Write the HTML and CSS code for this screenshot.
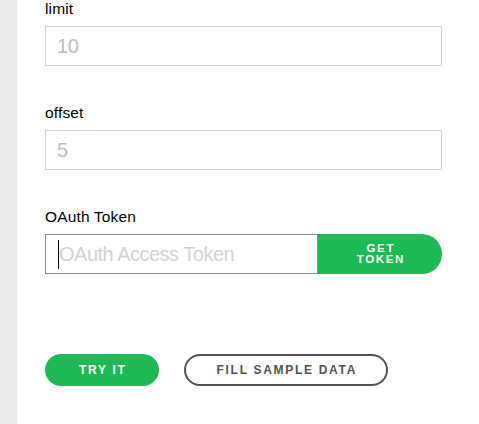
FILE: index.html
```html
<!DOCTYPE html>
<html>
<head>
<meta charset="utf-8">
<link rel="stylesheet" href="styles.css">
</head>
<body>
<div class="page">
  <aside class="rail"></aside>
  <main class="main">
    <div class="field">
      <label class="label">limit</label>
      <input class="input" type="text" placeholder="10">
    </div>
    <div class="field">
      <label class="label">offset</label>
      <input class="input" type="text" placeholder="5">
    </div>
    <div class="field">
      <label class="label">OAuth Token</label>
      <div class="token-row">
        <div class="token-wrap">
          <input class="input token-input" type="text" placeholder="OAuth Access Token">
          <span class="caret"></span>
        </div>
        <button class="get-token">GET<br>TOKEN</button>
      </div>
    </div>
    <div class="actions">
      <button class="btn btn-primary">TRY IT</button>
      <button class="btn btn-outline">FILL SAMPLE DATA</button>
    </div>
  </main>
</div>
</body>
</html>
```

FILE: styles.css
```css
* { box-sizing: border-box; }
html, body { margin: 0; padding: 0; background: #fff; }
body { font-family: "Liberation Sans", Arial, sans-serif; }

.page {
  display: flex;
  min-height: 424px;
}
.rail {
  width: 17px;
  flex: 0 0 17px;
  background: #ebebeb;
}
.main {
  flex: 1;
  padding: 0 37px 0 28px;
  display: flex;
  flex-direction: column;
}
.field {
  display: flex;
  flex-direction: column;
  margin-bottom: 38px;
}
.label {
  font-size: 15.5px;
  line-height: 18px;
  letter-spacing: 0.15px;
  color: #000;
  margin-bottom: 8px;
}
.input {
  width: 100%;
  height: 40px;
  border: 1px solid #d2d2d2;
  border-radius: 0;
  padding: 0 11px;
  font-family: "Liberation Sans", Arial, sans-serif;
  font-size: 20px;
  letter-spacing: -0.4px;
  color: #222;
  outline: none;
  background: #fff;
}
.input::placeholder { color: #bdbdbd; }

.token-row {
  display: flex;
  height: 40px;
}
.token-wrap {
  position: relative;
  width: 273px;
  flex: 0 0 273px;
}
.token-input {
  border-color: #8a8a8a;
  padding-left: 13px;
  letter-spacing: -0.5px;
}
.token-input::placeholder { color: #d2d2d2; }
.caret {
  position: absolute;
  left: 13px;
  top: 6px;
  width: 1px;
  height: 29px;
  background: #000;
}
.get-token {
  flex: 1;
  height: 40px;
  border: none;
  border-radius: 0 20px 20px 0;
  background: #1db954;
  color: #fff;
  font-family: "Liberation Sans", Arial, sans-serif;
  font-weight: bold;
  font-size: 11.5px;
  line-height: 11px;
  letter-spacing: 1.6px;
  padding: 0 0 0 1.6px;
  text-align: center;
}

.actions {
  display: flex;
  gap: 25px;
  margin-top: 42px;
}
.btn {
  height: 32px;
  border-radius: 16px;
  font-family: "Liberation Sans", Arial, sans-serif;
  font-weight: bold;
  font-size: 12px;
  letter-spacing: 1.7px;
  line-height: 1;
  cursor: pointer;
}
.btn-primary {
  background: #1db954;
  color: #fff;
  border: none;
  padding: 0 32px 0 34px;
}
.btn-outline {
  background: #fff;
  color: #535353;
  border: 2px solid #535353;
  padding: 0 29px 0 31px;
}
```
